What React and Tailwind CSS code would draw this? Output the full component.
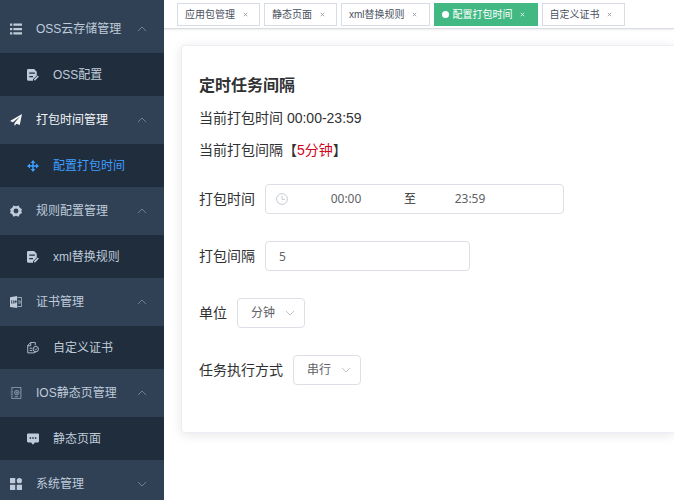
import { useState } from "react";

const icons = {
  list: (
    <path
      fill="currentColor"
      d="M0 .8h3v3H0zM4.500 .8H16v3H4.500zM0 6.500h3v3H0zM4.500 6.500H16v3H4.500zM0 12.200h3v3H0zM4.500 12.200H16v3H4.500z"
    />
  ),
  edit: (
    <g>
      <path
        fill="currentColor"
        fillRule="evenodd"
        d="M1.500 0H9.500L13 3.500V8.500L8 13.500V15.500H1.500Q0 15.500 0 14V1.500Q0 0 1.500 0zM3 4.800v1.600h7.500V4.800zM3 9.300v1.600h5V9.300z"
      />
      <path d="M9.800 14.800L15 9.300" stroke="currentColor" strokeWidth="2.200" />
    </g>
  ),
  send: <path fill="currentColor" d="M16 0L0 9.300l3.800 1.700L13 3.500 6 12v4l2.600-3 4.400 1.800z" />,
  move: (
    <g>
      <path fill="none" stroke="currentColor" strokeWidth="2" d="M8 2v12M2 8h12" />
      <path
        fill="currentColor"
        d="M8 0l3.200 4H4.800zM8 16l3.200-4H4.800zM0 8l4-3.200v6.400zM16 8l-4-3.200v6.400z"
      />
    </g>
  ),
  gear: (
    <path
      fill="currentColor"
      fillRule="evenodd"
      d="M4.500 .5L8 1.800 11.500 .5 13 3.800 16 5.500 15 8l1 2.500-3 1.700-1.500 3.300L8 14.200 4.500 15.500 3 12.200 0 10.500 1 8 0 5.500 3 3.800zM8 4.700a3.300 3.300 0 100 6.600 3.300 3.300 0 000-6.600z"
    />
  ),
  cert: (
    <g>
      <path
        fill="currentColor"
        fillRule="evenodd"
        d="M0 1.500L9.500 0v16L0 14.500zM1.500 6v4h2V9h-1V7h1V6zM4.300 6v4h1V6zM6 6v4h1V8.700h1.800V6z"
      />
      <path fill="none" stroke="currentColor" d="M10 2h5.500v12H10M11 6.500h2.500v3H11" />
    </g>
  ),
  paper: (
    <g fill="none" stroke="currentColor" strokeWidth="1.200">
      <path d="M9 14.500H1V4.500l4-4H11V4.500M1 5h4V.5M3.500 8.300H7M3.500 11.300H7" />
      <circle cx="11.700" cy="9.500" r="3.600" />
      <path d="M10.200 9.500l1.200 1.200 2-2.200M9 14.500l2.700-1.300" />
    </g>
  ),
  phone: (
    <g fill="none" stroke="currentColor" opacity="0.85">
      <path d="M2.500 4V.5h12v15h-12V12M1 5.500h3M1 8h3M1 10.500h3M6 13h5" />
      <circle cx="9" cy="7.500" r="3" />
      <circle cx="9" cy="7.500" r="1" />
    </g>
  ),
  message: (
    <path
      fill="currentColor"
      fillRule="evenodd"
      d="M1.500 .5h13Q16 .5 16 2v9q0 1.500-1.500 1.500H10.500L8 15.500 5.500 12.500h-4Q0 12.500 0 11V2Q0 .5 1.500 .5zM3.500 5.500v2h2v-2zM7 5.500v2h2v-2zM10.500 5.500v2h2v-2z"
    />
  ),
  grid: (
    <g fill="currentColor">
      <path d="M0 0h7v7H0zM0 9h7v7H0zM9 9h7v7H9z" />
      <circle cx="12.500" cy="3.500" r="3.500" />
    </g>
  ),
  clock: (
    <g fill="none" stroke="currentColor" strokeWidth="1.200">
      <circle cx="8" cy="8" r="7.200" />
      <path d="M8 3.500V8.500H12" />
    </g>
  ),
};

const menu = [
  { title: "OSS云存储管理", icon: "list", child: "OSS配置", childIcon: "edit" },
  { title: "打包时间管理", icon: "send", child: "配置打包时间", childIcon: "move", active: true },
  { title: "规则配置管理", icon: "gear", child: "xml替换规则", childIcon: "edit" },
  { title: "证书管理", icon: "cert", child: "自定义证书", childIcon: "paper" },
  { title: "IOS静态页管理", icon: "phone", child: "静态页面", childIcon: "message" },
  { title: "系统管理", icon: "grid" },
];

const tabs = ["应用包管理", "静态页面", "xml替换规则", "配置打包时间", "自定义证书"];

function Icon({ name }) {
  return (
    <svg viewBox="0 0 16 16" className="size-3 shrink-0" aria-hidden="true">
      {icons[name]}
    </svg>
  );
}

function Chevron({ up, className }) {
  return (
    <svg viewBox="0 0 10 6" className={className} fill="none" stroke="currentColor" aria-hidden="true">
      <path d={up ? "M1 5l4-4 4 4" : "M1 1l4 4 4-4"} />
    </svg>
  );
}

function Sidebar() {
  return (
    <nav className="w-41 shrink-0 overflow-hidden bg-[#304156] pt-[5px] text-xs text-[#bfcbd9]">
      {menu.map((m) => (
        <div key={m.title}>
          <button
            type="button"
            className={`flex h-12 w-full items-center pr-[17px] pl-2.5 ${m.active ? "text-[#f4f4f5]" : ""}`}
          >
            <Icon name={m.icon} />
            <span className="ml-3.5 flex-1 text-left">{m.title}</span>
            <Chevron up={!!m.child} className="h-1.5 w-2.5 text-[#6f7f93]" />
          </button>
          {m.child && (
            <a
              href="#"
              className={`flex h-[43px] items-center bg-[#1f2d3d] pl-[27px] ${m.active ? "text-[#409eff]" : ""}`}
            >
              <Icon name={m.childIcon} />
              <span className="ml-3.5">{m.child}</span>
            </a>
          )}
        </div>
      ))}
    </nav>
  );
}

function TabBar() {
  return (
    <div className="flex h-[29px] gap-1 border-b border-[#d8dce5] bg-white pt-[3px] pl-[13px] text-[10px] shadow-[0_1px_2px_rgba(0,0,0,0.08)]">
      {tabs.map((t) => {
        const active = t === "配置打包时间";
        return (
          <div
            key={t}
            className={`flex h-[23px] shrink-0 items-center border pr-2 pl-[7px] ${
              active ? "border-[#42b983] bg-[#42b983] text-white" : "border-[#d8dce5] text-[#495060]"
            }`}
          >
            {active && <span className="mr-1 size-[7px] rounded-full bg-white" />}
            <a href="#">{t}</a>
            <button
              type="button"
              aria-label="关闭"
              className={`ml-1 flex w-3 justify-center ${active ? "text-white" : "text-[#8a8f99]"}`}
            >
              <svg viewBox="0 0 5 5" className="size-[5px]" fill="none" stroke="currentColor" strokeWidth="0.8">
                <path d="M.8.8l3.400 3.400M4.200.8L.8 4.200" />
              </svg>
            </button>
          </div>
        );
      })}
    </div>
  );
}

function SelectRow({ id, label, options }) {
  const [value, setValue] = useState(options[0]);
  return (
    <div className="flex items-center gap-2.5">
      <label htmlFor={id}>{label}</label>
      <div className="relative">
        <select
          id={id}
          value={value}
          onChange={(e) => setValue(e.target.value)}
          className="block h-[30px] w-17 appearance-none rounded border border-[#dcdfe6] bg-white pl-[13px] text-xs text-[#606266]"
        >
          {options.map((o) => (
            <option key={o}>{o}</option>
          ))}
        </select>
        <Chevron className="pointer-events-none absolute top-3 right-2.5 h-1.5 w-2.5 text-[#c0c4cc]" />
      </div>
    </div>
  );
}

export default function App() {
  return (
    <div className="flex h-screen overflow-hidden bg-white font-['Liberation_Sans','Noto_Sans_CJK_SC',sans-serif]">
      <Sidebar />
      <main className="min-w-0 flex-1">
        <TabBar />
        <section className="mt-4 ml-[17px] rounded-l border border-r-0 border-[#ebeef5] bg-white px-[17px] pt-7 pb-[47px] text-sm text-[#303133] shadow-[0_2px_12px_rgba(0,0,0,0.1)]">
          <h3 className="text-base leading-6 font-bold">定时任务间隔</h3>
          <p className="mt-2.5 leading-5">当前打包时间 00:00-23:59</p>
          <p className="mt-3 leading-5">
            当前打包间隔【<span className="text-[#d0021b]">5分钟</span>】
          </p>
          <form className="mt-6 flex flex-col gap-[27px]">
            <div className="flex items-center gap-2.5">
              <label htmlFor="start">打包时间</label>
              <div className="flex h-[30px] w-[299px] items-center rounded border border-[#dcdfe6] pl-2.5 font-['Noto_Sans','Noto_Sans_CJK_SC',sans-serif] text-xs text-[#606266]">
                <span className="mr-1 flex text-[#c0c4cc]">
                  <Icon name="clock" />
                </span>
                <input id="start" defaultValue="00:00" className="w-27 text-center" />
                <span className="w-5 text-center text-[#303133]">至</span>
                <input aria-label="结束时间" defaultValue="23:59" className="w-25 text-center" />
              </div>
            </div>
            <div className="flex items-center gap-2.5">
              <label htmlFor="interval">打包间隔</label>
              <input
                id="interval"
                defaultValue="5"
                className="h-[30px] w-[205px] rounded border border-[#dcdfe6] px-[13px] font-['Noto_Sans',sans-serif] text-xs text-[#606266]"
              />
            </div>
            <SelectRow id="unit" label="单位" options={["分钟", "小时"]} />
            <SelectRow id="mode" label="任务执行方式" options={["串行", "并行"]} />
          </form>
        </section>
      </main>
    </div>
  );
}
